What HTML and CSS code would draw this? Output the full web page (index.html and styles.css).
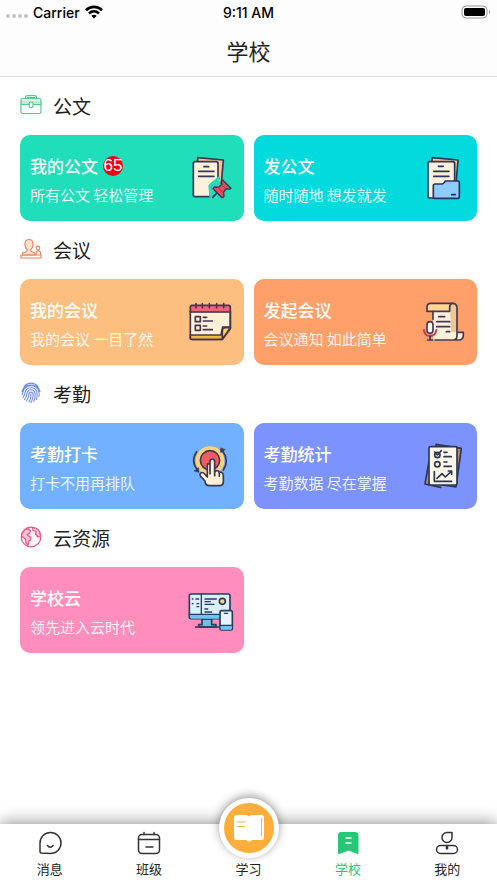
FILE: index.html
```html
<!DOCTYPE html>
<html lang="zh-CN">
<head>
  <meta charset="UTF-8">
  <meta name="viewport" content="width=device-width, initial-scale=1.0">
  <title>学校</title>
  <link rel="stylesheet" href="styles.css">
</head>
<body>
  <header class="header">
    <div class="status-bar">
      <div class="carrier">
        <span class="signal"><i></i><i></i><i></i><i></i></span>
        <span>Carrier</span>
        <svg width="18" height="14" viewBox="0 0 18 14" fill="none" stroke="#000" stroke-width="2.6">
          <path d="M1 5.2C5.5.8 12.500.8 17 5.200"/>
          <path d="M4 8.500c2.900-2.800 7.100-2.800 10 0"/>
          <path d="M9 13.500l-2.700-2.800c1.500-1.400 3.900-1.400 5.400 0z" fill="#000" stroke="none"/>
        </svg>
      </div>
      <span class="time">9:11 AM</span>
      <div class="battery">
        <svg width="30" height="14" viewBox="0 0 30 14">
          <rect x="1" y="1" width="25" height="12" rx="4" fill="none" stroke="#999"/>
          <rect x="3" y="3" width="21" height="8" rx="2" fill="#000"/>
          <path d="M28 5v4c1.500-.6 1.500-3.400 0-4z" fill="#999"/>
        </svg>
      </div>
    </div>
    <h1>学校</h1>
  </header>

  <main class="content">
    <section>
      <h2>
        <svg class="section-icon" viewBox="0 0 22 22" fill="none" stroke="#4fcb8d" stroke-width="1.200">
          <path d="M1 6.500h20v4H1z" fill="#b5f5d2" stroke="none"/>
          <rect x="1" y="4.500" width="20" height="15" rx="1.500"/>
          <path d="M5.500 4.500v-1c0-1 .6-1.800 1.600-1.800h7.800c1 0 1.600.8 1.600 1.800v1M7.500 4.500v-.8h7v.8M1 10.500h8M13 10.500h8"/>
          <rect x="9.200" y="8" width="3.800" height="5.500" rx="1.300" fill="#fff"/>
        </svg>
        公文
      </h2>
      <div class="cards">
        <a href="#" class="card teal">
          <div class="card-text">
            <h3>我的公文 <span class="badge">65</span></h3>
            <p>所有公文 轻松管理</p>
          </div>
          <svg class="card-icon" viewBox="24 27 144 144" stroke="#34385a" stroke-width="5" stroke-linejoin="round" stroke-linecap="round">
            <path d="M53 50V38l77 7-6 70" fill="#fbc58f"/>
            <path d="M45 50h64q5 0 5 5v46L94 121l-4 34H45q-5 0-5-5V55q0-5 5-5z" fill="#fff0dc"/>
            <path d="M72 65h14M56 79h46M56 94h46" fill="none"/>
            <path d="M116 100l-26 22 3 33" fill="none" stroke="#20deba" stroke-width="10"/>
            <path d="M98 157l14-15" fill="none"/>
            <path d="M128 105l25 25-7 3-7-2-8 10 1 14-6 3-27-27 4-5 13 1 10-9-2-8z" fill="#e94d5d" stroke-width="4"/>
            <path d="M121 116l19 18M112 125l19 20" fill="none" stroke="#9e344e" stroke-width="3"/>
          </svg>
        </a>
        <a href="#" class="card cyan">
          <div class="card-text">
            <h3>发公文</h3>
            <p>随时随地 想发就发</p>
          </div>
          <svg class="card-icon" viewBox="20 27 144 144" stroke="#27345d" stroke-width="5" stroke-linejoin="round" stroke-linecap="round">
            <path d="M53 50V38l78 7-6 70" fill="#fbc58f"/>
            <path d="M46 50h69q6 0 6 6v60l-60 43H46q-5 0-5-5V55q0-5 5-5z" fill="#fff0dc"/>
            <path d="M72 64h15M58 79h46M58 94h46" fill="none"/>
            <path d="M62 117h20q5 0 8-5l3-4h37q5 0 5 5v42q0 5-5 5H62q-5 0-5-5v-33q0-5 5-5z" fill="#8ccdff"/>
            <path d="M112 149h11" fill="none"/>
          </svg>
        </a>
      </div>
    </section>

    <section>
      <h2>
        <svg class="section-icon" viewBox="0 0 22 22" fill="none" stroke="#f0835f" stroke-width="1.200" stroke-linejoin="round">
          <path d="M7.200 11.500C4 8.500 4 1.500 9 1.500s5 7 1.800 10l.3 2 3.900 1.500v2H2.500v-2l4.400-1.500z" fill="#ffe1d4"/>
          <path d="M1 17h20v3H1z"/>
          <path d="M16 17v-3l2-1.500 2.500 1.500v3"/>
          <circle cx="18" cy="10" r="1.800"/>
        </svg>
        会议
      </h2>
      <div class="cards">
        <a href="#" class="card sand">
          <div class="card-text">
            <h3>我的会议</h3>
            <p>我的会议 一目了然</p>
          </div>
          <svg class="card-icon" viewBox="24 24 144 144" stroke="#453650" stroke-width="5" stroke-linejoin="round" stroke-linecap="round">
            <path d="M31 64h120v52l-24 32H36q-5 0-5-5z" fill="#fff0d7"/>
            <path d="M31 135h92l5-24h23l-25 37H36q-5 0-5-5z" fill="#f8b83f"/>
            <path d="M31 66V51q0-5 5-5h110q5 0 5 5v15z" fill="#ef6476"/>
            <path d="M127 148v-26q0-9 9-9h15z" fill="#ffd45c"/>
            <path d="M151 66v47M48 41v12M67 41v12M88 41v12M110 41v12M131 41v12" fill="none"/>
            <path d="M46 80h15v15H46zM46 106h15v15H46zM70 82h10M70 93h27M70 108h10M70 119h27" fill="none"/>
          </svg>
        </a>
        <a href="#" class="card coral">
          <div class="card-text">
            <h3>发起会议</h3>
            <p>会议通知 如此简单</p>
          </div>
          <svg class="card-icon" viewBox="20 24 144 144" stroke="#453856" stroke-width="5" stroke-linejoin="round" stroke-linecap="round">
            <path d="M56 43h58q14 0 14 14v69l-18 23H56z" fill="#fff0dc" stroke="none"/>
            <path d="M107 61V50q0-10 10-10 11 0 11 13v73h-17z" fill="#eec795" stroke="none"/>
            <path d="M49 40h65q-8 3-8 12v12H38V51q0-11 11-11z" fill="#ffd695"/>
            <path d="M56 64v24" fill="none"/>
            <path d="M110 127h37v8q0 15-14 15H62v-12h48z" fill="#fff0dc" stroke="none"/>
            <path d="M114 40q14 0 14 14v73h19v8q0 15-14 15H62M128 127v11q0 10-9 12" fill="none"/>
            <path d="M73 80h18M67 95h39M67 110h39M96 125h10" fill="none"/>
            <path d="M29 120q1 18 18 18t19-18" fill="none" stroke="#b9424e" stroke-width="6"/>
            <rect x="38" y="95" width="18" height="35" rx="9" fill="#fff"/>
            <path d="M47 139v11M40 150h15" fill="none"/>
          </svg>
        </a>
      </div>
    </section>

    <section>
      <h2>
        <svg class="section-icon" viewBox="0 0 22 22" fill="none" stroke="#6f8de8" stroke-width="1.100" stroke-linecap="round">
          <path d="M4 4.500c4-4.500 10-4.500 14 0M2 9.500c2-8.500 16-8.500 18 0M1.800 13c1-1.500 1-3 1.700-4.500 2.500-6.500 12.500-6.500 15 0 .8 2 .9 4 .5 6"/>
          <path d="M3 15.500c2-2.500 1.500-4 2.300-6 2-5 9.400-5 11.400 0 .9 2.500.7 5.500-.2 8"/>
          <path d="M4.500 17.500c2.500-3 2-5 2.700-7 1.300-3.600 6.300-3.600 7.600 0 .8 2.800.1 6-1 9"/>
          <path d="M6.500 19c2.600-3.500 2-5.500 2.600-7.500.6-1.900 3.200-1.900 3.800 0 .6 2.500-.4 6-1.900 9M9 20c1.500-2.500 2.200-5.500 2-8"/>
        </svg>
        考勤
      </h2>
      <div class="cards">
        <a href="#" class="card blue">
          <div class="card-text">
            <h3>考勤打卡</h3>
            <p>打卡不用再排队</p>
          </div>
          <svg class="card-icon" viewBox="24 20 144 144" stroke="#3b3a53" stroke-width="5" stroke-linejoin="round" stroke-linecap="round">
            <circle cx="90" cy="76" r="43" fill="#ffd17f" stroke="none"/>
            <circle cx="90" cy="75" r="29" fill="#f25a66"/>
            <path d="M54 105Q30 78 50 49M128 47q20 29 2 57" fill="none"/>
            <path d="M56 98v13l-13-4zM122 39v13l13-9z" fill="#3b3a53" stroke-width="2"/>
            <path d="M90 116V79q0-8 7-8t7 8v31q3-5 8-4 5 0 6 6 4-3 8 0t4 8v20q0 11-13 11H89q-14 0-14-14L62 123q-5-7 2-11 5-2 10 4l8 9V91q0-6 4-6t4 6z" fill="#fff0d7"/>
            <path d="M104 109v12M118 112v11" fill="none"/>
          </svg>
        </a>
        <a href="#" class="card indigo">
          <div class="card-text">
            <h3>考勤统计</h3>
            <p>考勤数据 尽在掌握</p>
          </div>
          <svg class="card-icon" viewBox="20 20 144 144" stroke="#293757" stroke-width="5" stroke-linejoin="round" stroke-linecap="round">
            <path d="M65 27l76 12-16 116-50-8zM44 78l-12 68 47 10" fill="#b58e70"/>
            <rect x="44" y="34" width="84" height="115" rx="5" fill="#fff6e8"/>
            <circle cx="69" cy="59" r="8" fill="none"/>
            <circle cx="69" cy="87" r="8" fill="none"/>
            <path d="M61 50l8 9 12-13M89 51h9M89 64h22M89 80h9M89 93h22M60 109v29h52M68 129l15-14 10 10 18-17M102 107h10v10" fill="none"/>
          </svg>
        </a>
      </div>
    </section>

    <section>
      <h2>
        <svg class="section-icon" viewBox="0 0 22 22" fill="#ffc4d7" stroke="#e8557f" stroke-width="1.200" stroke-linejoin="round">
          <circle cx="11" cy="11" r="9.800" fill="#fff3f7"/>
          <path d="M1.500 8.500L5 3.500 8.500 3l2 2-1.500 2.500-2 1 1.500 1.500 2.500 1.500-.5 2.500-2 1.500-.5 4-2-2.500-.5-4-3-2zM12.500 1.500l.5 3 3 1-.5 2.500 2.500 3 2.500-1-1-4.500-3-3z"/>
        </svg>
        云资源
      </h2>
      <div class="cards">
        <a href="#" class="card pink">
          <div class="card-text">
            <h3>学校云</h3>
            <p>领先进入云时代</p>
          </div>
          <svg class="card-icon" viewBox="24 18 144 144" stroke="#283c61" stroke-width="5" stroke-linejoin="round" stroke-linecap="round">
            <path d="M66 117h29v17h13v7H56v-7h10z" fill="#78bce8"/>
            <rect x="28" y="42" width="122" height="74" rx="5" fill="#dcefff"/>
            <path d="M30 104h118v8q0 4-4 4H34q-4 0-4-4z" fill="#69c7f2" stroke="none"/>
            <path d="M28 103h120M64 42v60M46 141h72M37 57h2M48 57h8M37 71h2M51 71h5M51 80h5M75 57h34M75 65h16M75 73h27M75 87h8M75 96h20" fill="none" stroke-width="4"/>
            <circle cx="127" cy="64" r="9" fill="#ffd27d"/>
            <rect x="120" y="92" width="37" height="58" rx="5" fill="#e5f4ff"/>
            <path d="M122 137h33v9q0 3-3 3h-27q-3 0-3-3z" fill="#69c7f2" stroke="none"/>
            <path d="M120 136h37M133 100h10" fill="none" stroke-width="4"/>
          </svg>
        </a>
      </div>
    </section>
  </main>

  <nav class="tab-bar">
    <a href="#" class="tab">
      <svg class="tab-icon" viewBox="0 0 24 24" fill="none" stroke="#333" stroke-width="1.500" stroke-linecap="round" stroke-linejoin="round">
        <path d="M3 22l-1-1V12a10.500 10.500 0 1 1 10.500 10.500z"/>
        <path d="M9.500 14.500c1.500 2.300 4 2.300 5.500 0"/>
      </svg>
      消息
    </a>
    <a href="#" class="tab">
      <svg class="tab-icon" viewBox="0 0 24 24" fill="none" stroke="#333" stroke-width="1.500" stroke-linecap="round">
        <rect x="1.500" y="3.500" width="21" height="19" rx="3.500"/>
        <path d="M1.500 8.500h21M7 1.500v2M17 1.500v2M9 16h7"/>
      </svg>
      班级
    </a>
    <a href="#" class="tab">
      <span class="study-button">
        <svg width="30" height="28" viewBox="0 0 30 28">
          <path d="M2.500 1H13l2 1.500L17 1h10.500Q30 1 30 3.500v20q0 2.500-2.500 2.500H18q-3 3-6 0H2.500Q0 26 0 23.500v-20Q0 1 2.500 1z" fill="#fff"/>
          <path d="M3 8h8M3 12.500h8M27.500 4v18" fill="none" stroke="#ffae3b"/>
        </svg>
      </span>
      学习
    </a>
    <a href="#" class="tab active">
      <svg class="tab-icon" viewBox="0 0 24 24">
        <path d="M5 1h14q3.500 0 3.500 3.500V22q0 1.500-1.500.8L12.500 19.500 4 22.800q-2 .7-2-1V4.500Q2 1 5 1z" fill="#24c877"/>
        <path d="M9.500 7h6M9.500 12h6" stroke="#fff" stroke-width="1.500"/>
      </svg>
      学校
    </a>
    <a href="#" class="tab">
      <svg class="tab-icon" viewBox="0 0 24 24" fill="none" stroke="#333" stroke-width="1.500" stroke-linejoin="round">
        <path d="M12 1.500h5V6.500a5 5 0 1 1-5-5z"/>
        <rect x="1.500" y="14.500" width="21" height="8" rx="4"/>
        <path d="M12 15v3.500" stroke-width="2.500"/>
      </svg>
      我的
    </a>
  </nav>
</body>
</html>
```
FILE: styles.css
```css
* {
  box-sizing: border-box;
}

body {
  font-family: "Noto Sans CJK SC", sans-serif;
  background-color: white;
  color: #222;
  margin: 0;
  min-height: 100vh;
  display: flex;
  flex-direction: column;
}

a {
  text-decoration: none;
  color: inherit;
}

h1, h2, h3, p {
  margin: 0;
}

svg {
  display: block;
  flex-shrink: 0;
}

/* header */
.header {
  background-color: #fdfdfd;
  border-bottom: 1px solid #dedede;
}

.status-bar {
  display: grid;
  grid-template-columns: 1fr auto 1fr;
  align-items: center;
  height: 24px;
  padding: 0 6px;
  color: #000;
  font-family: Inter, sans-serif;
  font-size: 14px;
  font-weight: 500;
}

.carrier {
  display: flex;
  align-items: center;
  gap: 5px;
}

.signal {
  display: flex;
  gap: 2px;
  padding-top: 8px;
}

.signal i {
  width: 4px;
  height: 4px;
  border-radius: 50%;
  background-color: #c4c4c4;
}

.battery {
  justify-self: end;
}

h1 {
  font-size: 22px;
  font-weight: 400;
  line-height: 52px;
  text-align: center;
}

/* sections */
.content {
  flex: 1;
  padding: 0 20px 20px;
}

h2 {
  display: flex;
  align-items: center;
  gap: 11px;
  height: 58px;
  padding-bottom: 2px;
  font-size: 19px;
  font-weight: 400;
}

.section-icon {
  width: 22px;
  height: 22px;
}

.cards {
  display: grid;
  grid-template-columns: 1fr 1fr;
  gap: 10px;
}

.card {
  display: flex;
  align-items: center;
  justify-content: space-between;
  height: 86px;
  padding: 0 8px 0 10px;
  border-radius: 10px;
  color: white;
}

.card-text {
  padding-top: 4px;
}

h3 {
  display: flex;
  align-items: center;
  gap: 5px;
  font-size: 17px;
  font-weight: 500;
  line-height: 30px;
}

.card p {
  color: rgba(255, 255, 255, 0.9);
  font-size: 15px;
  font-weight: 400;
  line-height: 28px;
}

.card-icon {
  width: 48px;
  height: 48px;
}

.badge {
  width: 20px;
  height: 20px;
  border-radius: 50%;
  background-color: #f00010;
  font-family: "Liberation Sans", sans-serif;
  font-size: 17px;
  font-weight: 400;
  line-height: 20px;
  display: flex;
  justify-content: center;
}

.teal {
  background-color: #20deba;
}

.cyan {
  background-color: #02dadd;
}

.sand {
  background-color: #fcbf7f;
}

.coral {
  background-color: #ffa06b;
}

.blue {
  background-color: #72b1ff;
}

.indigo {
  background-color: #7c93ff;
}

.pink {
  background-color: #ff8ebc;
}

/* bottom tabs */
.tab-bar {
  display: flex;
  height: 59px;
  background-color: white;
  box-shadow: 0 0 16px rgba(0, 0, 0, 0.5);
}

.tab {
  flex: 1;
  display: flex;
  flex-direction: column;
  align-items: center;
  justify-content: flex-end;
  gap: 4px;
  padding-bottom: 4px;
  font-size: 13px;
  line-height: 20px;
}

.tab-icon {
  width: 24px;
  height: 24px;
}

.tab.active {
  color: #24c877;
}

.study-button {
  display: flex;
  align-items: center;
  justify-content: center;
  flex-shrink: 0;
  width: 60px;
  height: 60px;
  margin-bottom: -3px;
  border: 5px solid white;
  border-radius: 50%;
  background-color: #ffae3b;
  box-shadow: 0 -2px 10px rgba(0, 0, 0, 0.4);
}
```
